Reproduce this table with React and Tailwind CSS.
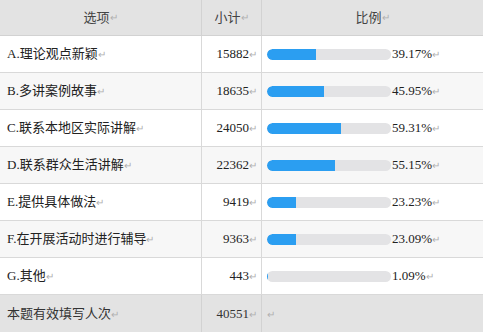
const ROWS = [
  { label: 'A.理论观点新颖', count: 15882, pct: 39.17 },
  { label: 'B.多讲案例故事', count: 18635, pct: 45.95 },
  { label: 'C.联系本地区实际讲解', count: 24050, pct: 59.31 },
  { label: 'D.联系群众生活讲解', count: 22362, pct: 55.15 },
  { label: 'E.提供具体做法', count: 9419, pct: 23.23 },
  { label: 'F.在开展活动时进行辅导', count: 9363, pct: 23.09 },
  { label: 'G.其他', count: 443, pct: 1.09 }
]

function Ret() {
  return <span className="text-[10px] text-[#b0b0b0]">↵</span>
}

export default function App() {
  return (
    <div className="w-[483px] h-[332px] overflow-hidden bg-white text-[13px] text-[#222]"
      style={{ fontFamily: '"Liberation Serif", "Noto Sans CJK SC", serif' }}>
      {/* header */}
      <div className="flex h-[36px] bg-[#e3e3e3] border-b border-[#d2d2d2] text-[#444]">
        <div className="w-[202px] flex items-center justify-center border-r border-[#d2d2d2]">选项<Ret /></div>
        <div className="w-[60px] flex items-center justify-center border-r border-[#d2d2d2]">小计<Ret /></div>
        <div className="flex-1 flex items-center justify-center">比例<Ret /></div>
      </div>

      {ROWS.map((r, i) => (
        <div key={r.label} className={`flex h-[37px] border-b border-[#d9d9d9] ${i % 2 ? 'bg-[#f7f7f7]' : 'bg-white'}`}>
          <div className="w-[202px] flex items-center pl-[7px] border-r border-[#d9d9d9]">{r.label}<Ret /></div>
          <div className="w-[60px] flex items-center justify-end pr-[4px] border-r border-[#d9d9d9]">{r.count}<Ret /></div>
          <div className="flex-1 flex items-center pl-[5px]">
            <div className="w-[124px] h-[11px] rounded-full bg-[#e3e3e5] overflow-hidden">
              <div className="h-full bg-[#2b9ef1] rounded-l-full" style={{ width: `${r.pct}%` }} />
            </div>
            <span className="ml-[1px]">{r.pct.toFixed(2)}%</span><Ret />
          </div>
        </div>
      ))}

      {/* footer */}
      <div className="flex h-[38px] bg-[#e3e3e3] text-[#333]">
        <div className="w-[202px] flex items-center pl-[7px] border-r border-[#d2d2d2]">本题有效填写人次<Ret /></div>
        <div className="w-[60px] flex items-center justify-end pr-[4px] border-r border-[#d2d2d2]">40551<Ret /></div>
        <div className="flex-1 flex items-center pl-[5px]"><Ret /></div>
      </div>
    </div>
  )
}
